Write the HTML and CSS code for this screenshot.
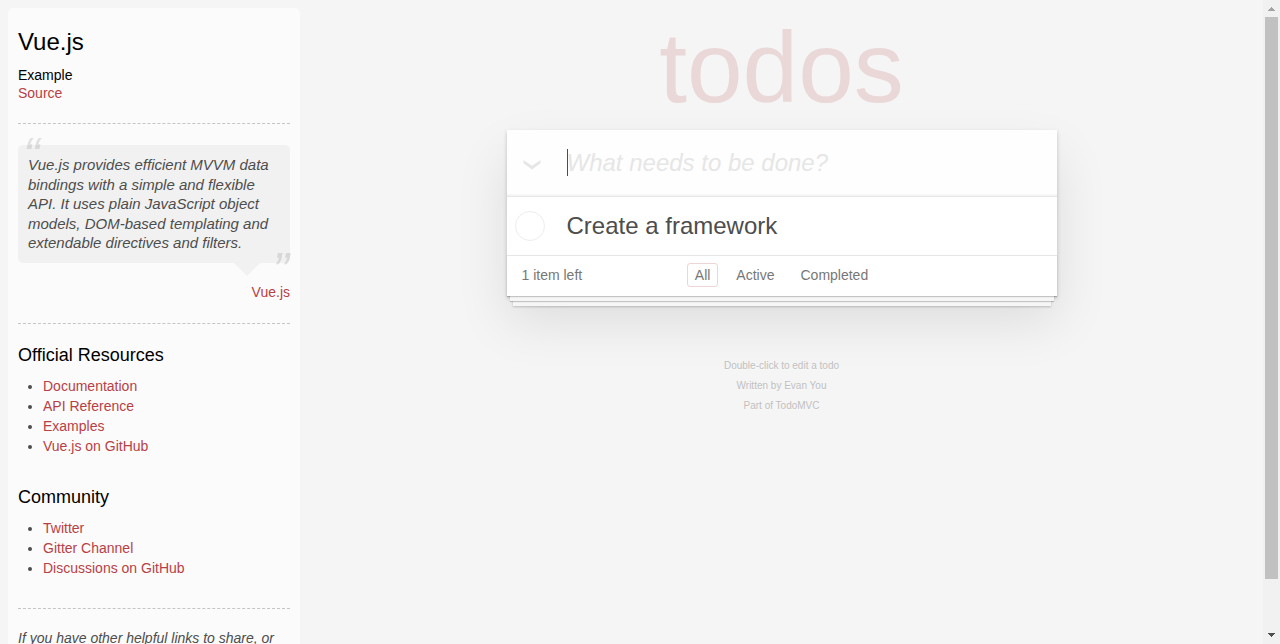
FILE: index.html
```html
<!DOCTYPE html>
<html lang="en">
<head>
<meta charset="utf-8">
<meta name="viewport" content="width=device-width, initial-scale=1">
<title>Vue.js • TodoMVC</title>
<link rel="stylesheet" href="styles.css">
</head>
<body>
<div class="page">
  <aside class="learn">
    <h3>Vue.js</h3>
    <div class="source-links">
      <h5>Example</h5>
      <a href="#source">Source</a>
    </div>
    <hr>
    <blockquote class="quote">
      <p>Vue.js provides efficient MVVM data bindings with a simple and flexible API. It uses plain JavaScript object models, DOM-based templating and extendable directives and filters.</p>
      <footer><a href="#vue">Vue.js</a></footer>
    </blockquote>
    <hr>
    <h4>Official Resources</h4>
    <ul>
      <li><a href="#docs">Documentation</a></li>
      <li><a href="#api">API Reference</a></li>
      <li><a href="#examples">Examples</a></li>
      <li><a href="#github">Vue.js on GitHub</a></li>
    </ul>
    <h4>Community</h4>
    <ul>
      <li><a href="#twitter">Twitter</a></li>
      <li><a href="#gitter">Gitter Channel</a></li>
      <li><a href="#discussions">Discussions on GitHub</a></li>
    </ul>
    <hr>
    <p class="learn-note">If you have other helpful links to share, or</p>
  </aside>

  <main class="content">
    <h1>todos</h1>
    <section class="todoapp">
      <header class="entry">
        <button class="toggle-all" type="button" aria-label="Mark all as complete">
          <svg width="18" height="12" viewBox="0 0 18 12" aria-hidden="true"><path d="M.5 1v3.300L9 10.600l8.500-6.300V1L9 6.800z" fill="#e6e6e6"/></svg>
        </button>
        <div class="entry-field">
          <input class="new-todo" type="text" placeholder="What needs to be done?" aria-label="New todo" autocomplete="off">
          <span class="caret"></span>
        </div>
      </header>
      <ul class="todo-list">
        <li>
          <input class="toggle" type="checkbox" id="todo-1">
          <label for="todo-1">Create a framework</label>
        </li>
      </ul>
      <footer class="footer">
        <span class="todo-count">1 item left</span>
        <nav class="filters">
          <a class="selected" href="#all">All</a>
          <a href="#active">Active</a>
          <a href="#completed">Completed</a>
        </nav>
      </footer>
    </section>
    <footer class="info">
      <p>Double-click to edit a todo</p>
      <p>Written by <a href="#evan">Evan You</a></p>
      <p>Part of <a href="#todomvc">TodoMVC</a></p>
    </footer>
  </main>

  <div class="scrollbar" aria-hidden="true">
    <svg class="arrow" width="17" height="17" viewBox="0 0 17 17" shape-rendering="crispEdges"><path d="M8 7h1v1h1v1h1v1h1v1H5v-1h1V9h1V8h1z" fill="#a3a3a3"/></svg>
    <div class="track"><div class="thumb"></div></div>
    <svg class="arrow" width="17" height="17" viewBox="0 0 17 17" shape-rendering="crispEdges"><path d="M5 6h7v1h-1v1h-1v1H9v1H8V9H7V8H6V7H5z" fill="#505050"/></svg>
  </div>
</div>
</body>
</html>
```

FILE: styles.css
```css
* {
  box-sizing: border-box;
}

body {
  margin: 0;
  background: #f5f5f5;
  color: #4d4d4d;
  font: 14px/20px "Liberation Sans", Arial, sans-serif;
}

.page {
  display: flex;
  height: 100vh;
  overflow: hidden;
}

/* Sidebar */
.learn {
  flex: none;
  width: 292px;
  margin: 8px 0 0 8px;
  padding: 10px 10px 0;
  border-radius: 5px 5px 0 0;
  background: rgba(255, 255, 255, 0.6);
}

.learn a {
  color: #b83f45;
  text-decoration: none;
}

.learn h3,
.learn h4,
.learn h5 {
  margin: 10px 0;
  color: #000;
  font-weight: 500;
}

.learn h3 {
  font-size: 24px;
  line-height: 28px;
}

.learn h4 {
  font-size: 18px;
  line-height: 22px;
}

.learn .source-links h5 {
  margin: 0;
  font-size: 14px;
}

.source-links {
  line-height: 18px;
}

.learn hr {
  margin: 21px 0 20px;
  border: 0;
  border-top: 1px dashed #c5c5c5;
}

.learn ul {
  margin: 0 0 30px 25px;
  padding: 0;
}

.quote {
  position: relative;
  margin: 21px 0 60px;
  padding: 10px;
  border-radius: 5px;
  background: rgba(0, 0, 0, 0.04);
}

.quote p {
  margin: 0;
  font-size: 15px;
  font-style: italic;
  line-height: 1.3;
}

.quote p::before,
.quote p::after {
  position: absolute;
  font-size: 50px;
  opacity: 0.15;
}

.quote p::before {
  content: "“";
  top: -21px;
  left: 5px;
}

.quote p::after {
  content: "”";
  right: 1px;
  bottom: -41px;
}

.quote::after {
  content: "";
  position: absolute;
  top: 100%;
  right: 30px;
  border: 13px solid transparent;
  border-top-color: rgba(0, 0, 0, 0.04);
  border-bottom: 0;
}

.quote footer {
  position: absolute;
  right: 0;
  bottom: -39px;
}

.learn-note {
  margin: 0;
  font-style: italic;
  line-height: 18px;
}

/* Todo card */
.content {
  flex: 1;
  min-width: 0;
}

h1 {
  margin: 0;
  padding-top: 4px;
  color: rgba(175, 47, 47, 0.15);
  font-size: 100px;
  font-weight: 100;
  line-height: 126px;
  text-align: center;
}

.todoapp {
  max-width: 550px;
  margin: 0 auto;
  background: #fff;
  box-shadow: 0 2px 4px rgba(0, 0, 0, 0.2), 0 25px 50px rgba(0, 0, 0, 0.1);
}

.entry {
  display: flex;
  height: 66px;
  background: rgba(0, 0, 0, 0.003);
  box-shadow: inset 0 -2px 1px rgba(0, 0, 0, 0.03);
}

.toggle-all {
  width: 60px;
  padding: 4px 10px 0 0;
  border: 0;
  background: none;
}

.toggle-all svg {
  display: block;
  margin: 0 auto;
}

.entry-field {
  position: relative;
  flex: 1;
}

.new-todo {
  width: 100%;
  height: 66px;
  padding: 0 16px 0 0;
  border: 0;
  outline: 0;
  background: none;
  color: inherit;
  font: 24px "Liberation Sans", Arial, sans-serif;
}

.new-todo::placeholder {
  color: #e6e6e6;
  font-style: italic;
  opacity: 1;
}

.caret {
  position: absolute;
  top: 19px;
  left: 0;
  width: 1px;
  height: 27px;
  background: #4d4d4d;
}

.todo-list {
  margin: 0;
  padding: 0;
  border-top: 1px solid #e6e6e6;
  list-style: none;
}

.todo-list li {
  display: flex;
  gap: 22px;
  align-items: center;
  padding: 0 15px 0 8px;
}

.toggle {
  width: 30px;
  height: 30px;
  margin: 0;
  border: 1px solid #ededed;
  border-radius: 50%;
  appearance: none;
}

.todo-list label {
  padding: 14px 0 15px;
  font-size: 24px;
  line-height: 29px;
}

.footer {
  display: grid;
  grid-template-columns: 1fr auto 1fr;
  align-items: center;
  padding: 7px 15px 9px;
  border-top: 1px solid #e6e6e6;
  color: #777;
  box-shadow: 0 1px 1px rgba(0, 0, 0, 0.2), 0 8px 0 -3px #f6f6f6,
    0 9px 1px -3px rgba(0, 0, 0, 0.2), 0 16px 0 -6px #f6f6f6,
    0 17px 2px -6px rgba(0, 0, 0, 0.2);
}

.filters {
  display: flex;
  gap: 10px;
}

.filters a {
  padding: 2px 7px;
  border: 1px solid transparent;
  border-radius: 3px;
  color: inherit;
  line-height: 18px;
  text-decoration: none;
}

.filters .selected {
  border-color: rgba(175, 47, 47, 0.2);
}

.info {
  margin-top: 65px;
  color: #bfbfbf;
  font-size: 10px;
  line-height: 10px;
  text-align: center;
  text-shadow: 0 1px 0 rgba(255, 255, 255, 0.5);
}

.info p {
  margin: 0 0 10px;
}

.info a {
  color: inherit;
  text-decoration: none;
}

/* Scroll bar */
.scrollbar {
  display: flex;
  flex: none;
  flex-direction: column;
  width: 17px;
  background: #f1f1f1;
}

.arrow {
  display: block;
}

.track {
  flex: 1;
  padding: 0 2px;
}

.thumb {
  height: 92.2%;
  background: #c1c1c1;
}
```
